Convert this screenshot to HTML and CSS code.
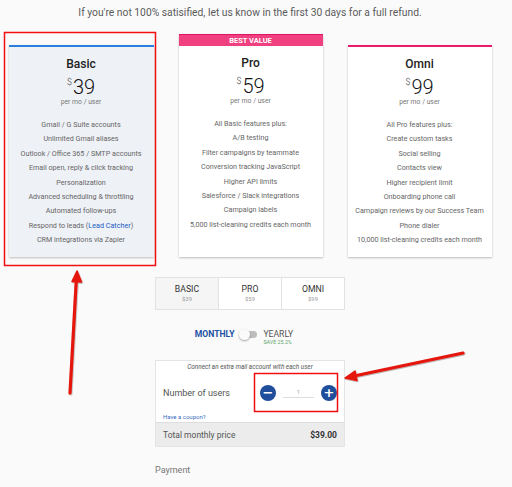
FILE: index.html
```html
<!DOCTYPE html>
<html lang="en">

<head>
    <meta charset="UTF-8">
    <meta name="viewport" content="width=device-width, initial-scale=1.0">
    <title>Pricing</title>
    <link rel="stylesheet" href="styles.css">
</head>

<body>
    <div class="page">
        <p class="refund">If you're not 100% satisified, let us know in the first 30 days for a full refund.</p>

        <div class="plans">
            <div class="plan plan-basic">
                <h2>Basic</h2>
                <div class="price"><span class="cur">$</span>39</div>
                <div class="per">per mo / user</div>
                <ul>
                    <li>Gmail / G Suite accounts</li>
                    <li>Unlimited Gmail aliases</li>
                    <li>Outlook / Office 365 / SMTP accounts</li>
                    <li>Email open, reply &amp; click tracking</li>
                    <li>Personalization</li>
                    <li>Advanced scheduling &amp; throttling</li>
                    <li>Automated follow-ups</li>
                    <li>Respond to leads (<a href="#">Lead Catcher</a>)</li>
                    <li>CRM integrations via Zapier</li>
                </ul>
            </div>
            <div class="plan plan-pro">
                <div class="badge">BEST VALUE</div>
                <h2>Pro</h2>
                <div class="price"><span class="cur">$</span>59</div>
                <div class="per">per mo / user</div>
                <ul>
                    <li>All Basic features plus:</li>
                    <li>A/B testing</li>
                    <li>Filter campaigns by teammate</li>
                    <li>Conversion tracking JavaScript</li>
                    <li>Higher API limits</li>
                    <li>Salesforce / Slack integrations</li>
                    <li>Campaign labels</li>
                    <li>5,000 list-cleaning credits each month</li>
                </ul>
            </div>
            <div class="plan plan-omni">
                <h2>Omni</h2>
                <div class="price"><span class="cur">$</span>99</div>
                <div class="per">per mo / user</div>
                <ul>
                    <li>All Pro features plus:</li>
                    <li>Create custom tasks</li>
                    <li>Social selling</li>
                    <li>Contacts view</li>
                    <li>Higher recipient limit</li>
                    <li>Onboarding phone call</li>
                    <li>Campaign reviews by our Success Team</li>
                    <li>Phone dialer</li>
                    <li>10,000 list-cleaning credits each month</li>
                </ul>
            </div>
        </div>

        <div class="tabs">
            <div class="tab active">BASIC<span>$39</span></div>
            <div class="tab">PRO<span>$59</span></div>
            <div class="tab">OMNI<span>$99</span></div>
        </div>

        <div class="billing">
            <span class="monthly">MONTHLY</span>
            <span class="switch"><span class="knob"></span></span>
            <span class="yearly">YEARLY<small>SAVE 25.2%</small></span>
        </div>

        <div class="users">
            <div class="note">Connect an extra mail account with each user</div>
            <div class="users-row">
                <span>Number of users</span>
                <div class="counter">
                    <button class="round">&minus;</button>
                    <span class="count">1</span>
                    <button class="round">+</button>
                </div>
            </div>
            <a class="coupon" href="#">Have a coupon?</a>
            <div class="total">
                <span>Total monthly price</span>
                <b>$39.00</b>
            </div>
        </div>

        <div class="payment">Payment</div>
    </div>

    <!-- annotations drawn over the screenshot -->
    <svg class="marks" width="512" height="487" viewBox="0 0 512 487">
        <defs>
            <filter id="sh" x="-20%" y="-20%" width="140%" height="140%">
                <feDropShadow dx="0.6" dy="0.8" stdDeviation="0.6" flood-color="#000" flood-opacity="0.35"/>
            </filter>
        </defs>
        <rect x="4.5" y="32.5" width="151" height="233" fill="none" stroke="#f01010" stroke-width="1.5"/>
        <rect x="254.5" y="373.5" width="83" height="38" fill="none" stroke="#f01010" stroke-width="1.5"/>
        <g filter="url(#sh)" fill="#e5150b" stroke="#e5150b" stroke-linecap="round" stroke-linejoin="round">
            <line x1="70" y1="393" x2="76.3" y2="280" stroke-width="3.2"/>
            <polygon points="77,271 81.5,282 72,281.5" stroke-width="1.5"/>
            <line x1="463" y1="353" x2="354" y2="376" stroke-width="3.2"/>
            <polygon points="345,378 355,371 357,380.5" stroke-width="1.5"/>
        </g>
    </svg>
</body>

</html>
```

FILE: styles.css
```css
body {
    margin: 0;
    background-color: #fafafa;
    font-family: Roboto, "Liberation Sans", sans-serif;
    color: #555;
    width: 512px;
    height: 487px;
    overflow: hidden;
    position: relative;
}

.page {
    width: 500px;
    display: flex;
    flex-direction: column;
    align-items: center;
}

.refund {
    margin: 7px 0 0;
    font-size: 10.3px;
    line-height: 12px;
    color: #5a5a5a;
}

.plans {
    display: flex;
    align-items: flex-end;
    gap: 25px;
    margin-top: 15px;
}

.plan {
    width: 144px;
    height: 212px;
    background-color: #fff;
    box-shadow: 0 1px 2px rgba(0, 0, 0, 0.25);
    text-align: center;
    box-sizing: border-box;
}

.plan-basic {
    width: 145px;
    background-color: #eef1f6;
    border-top: 2px solid #2b7fe0;
}

.plan-omni {
    border-top: 2px solid #ec1a6c;
}

.plan-pro {
    height: 223px;
}

.badge {
    height: 12px;
    background-color: #f0407f;
    border-top: 1px solid #e01565;
    color: #fff;
    font-size: 7.5px;
    font-weight: 700;
    line-height: 11px;
    box-sizing: border-box;
}

.plan h2 {
    margin: 10px 0 0;
    font-size: 12px;
    font-weight: 500;
    line-height: 14px;
    color: #222;
}

.price {
    font-size: 20px;
    font-weight: 300;
    line-height: 22px;
    color: #111;
}

.price .cur {
    font-size: 9px;
    vertical-align: 9px;
    margin-right: 1px;
    color: #444;
}

.per {
    font-size: 6.8px;
    line-height: 8px;
    color: #777;
}

.plan ul {
    list-style: none;
    margin: 12px 0 0;
    padding: 0;
}

.plan li {
    font-size: 7.2px;
    line-height: 14.4px;
    color: #666;
    white-space: nowrap;
}

.plan li a {
    color: #2060c0;
    text-decoration: none;
}

.tabs {
    display: flex;
    width: 190px;
    height: 33px;
    margin-top: 20px;
    border: 1px solid #e2e2e2;
    background-color: #fff;
    box-sizing: border-box;
}

.tab {
    flex: 1;
    display: flex;
    flex-direction: column;
    align-items: center;
    padding-top: 6px;
    font-size: 8.7px;
    line-height: 10px;
    color: #333;
}

.tab + .tab {
    border-left: 1px solid #e2e2e2;
}

.tab.active {
    background-color: #f5f5f5;
}

.tab span {
    margin-top: 1px;
    font-size: 5.8px;
    line-height: 8px;
    color: #999;
}

.billing {
    display: flex;
    align-items: flex-start;
    margin-top: 19px;
    margin-right: 12px;
    height: 31px;
}

.monthly {
    font-size: 8.6px;
    line-height: 10px;
    font-weight: 700;
    color: #2150a2;
}

.switch {
    position: relative;
    width: 16px;
    height: 7px;
    margin: 2px 6px 0 7px;
    border-radius: 4px;
    background-color: #bdbdbd;
}

.knob {
    position: absolute;
    left: -2px;
    top: -2px;
    width: 11px;
    height: 11px;
    border-radius: 50%;
    background-color: #fafafa;
    box-shadow: 0 1px 2px rgba(0, 0, 0, 0.35);
}

.yearly {
    display: flex;
    flex-direction: column;
    font-size: 8.6px;
    line-height: 10px;
    color: #555;
}

.yearly small {
    font-size: 5.3px;
    line-height: 7px;
    color: #5ba56d;
}

.users {
    width: 190px;
    border: 1px solid #e4e4e4;
    background-color: #fff;
    box-sizing: border-box;
}

.note {
    margin-top: 2px;
    font-size: 6.4px;
    line-height: 8px;
    font-style: italic;
    text-align: center;
    color: #555;
}

.users-row {
    display: flex;
    justify-content: space-between;
    align-items: center;
    padding: 8px 7px 0 7px;
    height: 36px;
    box-sizing: border-box;
    font-size: 9px;
    color: #555;
}

.counter {
    display: flex;
    align-items: center;
    gap: 7px;
}

.round {
    width: 16px;
    height: 16px;
    padding: 0;
    border: none;
    border-radius: 50%;
    background-color: #1f4f9c;
    color: #fff;
    font-family: "DejaVu Sans", sans-serif;
    font-size: 13px;
    font-weight: 700;
    line-height: 16px;
}

.count {
    width: 31px;
    padding-bottom: 2px;
    border-bottom: 1px solid #ddd;
    text-align: center;
    font-size: 6px;
    color: #aaa;
}

.coupon {
    display: block;
    margin: 6px 0 0 7px;
    font-size: 6px;
    line-height: 8px;
    color: #3d70c0;
    text-decoration: none;
}

.total {
    display: flex;
    justify-content: space-between;
    align-items: center;
    height: 23px;
    margin-top: 1px;
    padding: 0 7px;
    background-color: #ececec;
    border-top: 1px solid #ddd;
    font-size: 8.5px;
    color: #555;
}

.total b {
    color: #333;
}

.payment {
    align-self: flex-start;
    margin: 18px 0 0 155px;
    font-size: 9px;
    color: #777;
}

.marks {
    position: absolute;
    top: 0;
    left: 0;
    pointer-events: none;
}
```
